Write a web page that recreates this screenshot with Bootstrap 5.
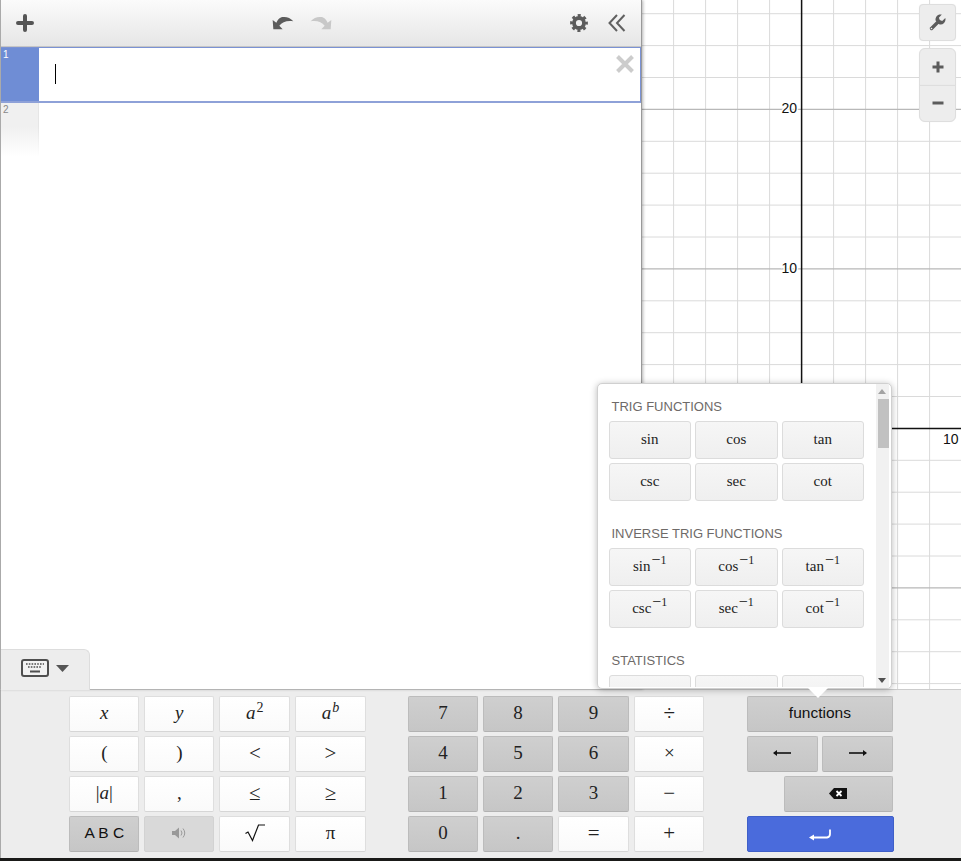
<!DOCTYPE html>
<html lang="en">
<head>
  <meta charset="UTF-8" />
  <title>Graphing Calculator</title>
  <link href="https://cdn.jsdelivr.net/npm/bootstrap@5.3.0/dist/css/bootstrap.min.css" rel="stylesheet" />
  <style>
    html, body { height: 100%; overflow: hidden; }
    body { background: #1a1a18; font-family: "Liberation Sans", Arial, sans-serif; color: #222; }
    svg { display: block; }

    .app { height: 858px; }
    .top { height: 689px; }

    /* expression panel */
    .panel { width: 642px; height: 689px; background: #fff; border-left: 1px solid #aaa; border-right: 1px solid #999; box-shadow: 1px 0 3px rgba(0,0,0,.3); z-index: 2; }
    .panel-head { height: 47px; flex: none; background: linear-gradient(#fbfbfb, #e6e6e6); border-bottom: 1px solid #c6c6c6; }
    .ico-plus { margin-left: 15px; }
    .ico-undo { margin-left: 238px; }
    .ico-redo { margin-left: 16px; }
    .ico-gear { margin-left: 238px; }
    .ico-back { margin-left: 20px; }
    .expr { height: 56px; flex: none; border-top: 1px solid #7b92d3; border-right: 1px solid #7b92d3; border-bottom: 2px solid #8ea1d8; }
    .expr-tab { width: 38px; font-size: 10px; line-height: 12px; padding: 1px 0 0 2px; }
    .expr-tab.on { background: #6f8dd5; color: #fff; }
    .expr-tab.off { background: linear-gradient(#f0f0f0 45%, #fff); color: #888; border-right: 1px solid; border-image: linear-gradient(#e6e6e6 45%, #fff) 1; }
    .expr-next { height: 53px; flex: none; }
    .cursor { width: 1px; height: 20px; background: #000; margin: 16px 0 0 16px; }
    .expr-del { margin: 7px 6px 0 0; }
    .kbd-tab { width: 89px; height: 41px; margin-bottom: -1px; background: #ededed; border-top: 1px solid #ddd; border-right: 1px solid #ddd; border-top-right-radius: 6px; padding: 0 0 4px 20px; gap: 7px; position: relative; }

    /* graph tools */
    .tools { top: 4px; right: 5px; width: 37px; z-index: 1; gap: 7px; }
    .tool { background: #ededed; border: 1px solid #dedede; width: 37px; height: 37px; padding: 0; box-shadow: 0 0 1px rgba(0,0,0,.08); }
    .tool:hover { background: #ededed; border-color: #dedede; }
    .tool-group .tool { height: 37.5px; }

    /* keypad */
    .keypad { height: 169px; background: #ededed; border-top: 1px solid #ccc; border-left: 1px solid #aaa; padding: 6px 0 0 68.3px; gap: 42.5px; }
    .keys { display: grid; grid-template-columns: 70px 70px 71px 70.3px; grid-auto-rows: 35.5px; gap: 4.5px 5px; }
    .keys-right { width: 146px; gap: 4.5px; }
    .keys-right > div { gap: 4.5px; height: 35.5px; }
    .key { padding: 0 0 1px; border-radius: 2px; display: flex; align-items: center; justify-content: center; font: 19px "Liberation Serif", "Times New Roman", serif; color: #222; background: linear-gradient(#fff, #fafafa); border: 1px solid #dedede; border-bottom-color: #d6d6d6; }
    .key.op { font-size: 21px; }
    .key.dark { background: linear-gradient(#cfcfcf, #c6c6c6); border-color: #bcbcbc; border-bottom-color: #b2b2b2; }
    .key.muted { background: #d9d9d9; border-color: #d2d2d2; }
    .key.sans { font: 15.5px "Liberation Sans", Arial, sans-serif; color: #111; }
    .key.blue { background: #4a6bdc; border-color: #3f5fc8; height: 35.5px; width: 147px; flex: none; }
    .key sup { font-size: 14px; top: -.5em; margin-left: 1px; }
    .grow { flex: 1 1 0; }
    .key-back { width: 109px; }
    .ret { margin-top: 3px; }

    /* functions popup */
    .fn-pop { left: 597px; top: 383px; width: 294.5px; height: 305.5px; background: #fff; border-radius: 5px; border: 1px solid #d0d0d0; box-shadow: 0 1px 7px rgba(0,0,0,.28); z-index: 5; }
    .fn-body { padding: 13px 12px 0 11px; width: 277.5px; height: 303px; overflow: hidden; }
    .fn-title { height: 19px; line-height: 20px; font-size: 13px; color: #6e6a68; padding-left: 2.500px; margin-bottom: 5px; }
    .fn-keys { display: grid; grid-template-columns: 81.5px 82.5px 81.5px; grid-auto-rows: 38px; gap: 4px 4.5px; margin-bottom: 23px; }
    .fn-key { padding: 0 0 2px; font: 15px "Liberation Serif", "Times New Roman", serif; color: #222; background: linear-gradient(#f6f6f6, #efefef); border: 1px solid #dcdcdc; border-radius: 3px; }
    .fn-key sup { font-size: 12px; top: -.55em; margin-left: 1px; }
    .fn-key sup span { font-size: 16px; vertical-align: -1px; }
    .scroll { width: 13px; background: #f1f1f1; margin-left: auto; margin-right: 2px; }
    .scroll-thumb { height: 49px; width: 11px; background: #c1c1c1; margin: 5px 0 0 2px; }
    .scroll-up { border: 4px solid transparent; border-top: 0; border-bottom: 5px solid #a3a3a3; margin: 5px auto 0; width: 0; }
    .scroll-down { border: 4px solid transparent; border-bottom: 0; border-top: 5px solid #505050; margin: auto auto 5px; width: 0; }
    .fn-arrow { left: 808px; top: 688px; z-index: 6; }
  </style>
</head>
<body>
  <div class="app position-relative d-flex flex-column">

    <div class="top d-flex position-relative">
      <!-- Expression list -->
      <div class="panel d-flex flex-column position-relative">
        <div class="panel-head d-flex align-items-center">
          <svg class="ico-plus" width="18" height="18" viewBox="0 0 18 18"><path d="M9 2v14M2 9h14" stroke="#555" stroke-width="4" stroke-linecap="round"/></svg>
          <svg class="ico-undo" width="22" height="14" viewBox="36 30 66 42"><path d="M38 42L40 70H68L58 59C66 49 82 42 100 46C92 36 80 32 70 33C62 33 55 37 49 50Z" fill="#5c5c5c"/></svg>
          <svg class="ico-redo" width="22" height="14" viewBox="36 30 66 42"><path d="M100 42L98 70H70L80 59C72 49 56 42 38 46C46 36 58 32 68 33C76 33 83 37 89 50Z" fill="#c8c8c8"/></svg>
          <svg class="ico-gear" width="18" height="18" viewBox="0 0 18 18"><circle cx="9" cy="9" r="5" fill="none" stroke="#5c5c5c" stroke-width="3.8"/><circle cx="9" cy="9" r="7.4" fill="none" stroke="#5c5c5c" stroke-width="3" stroke-dasharray="3 2.81" stroke-dashoffset="1.5"/></svg>
          <svg class="ico-back" width="18" height="18" viewBox="0 0 18 18"><path d="M9 1L1.5 9L9 17M16.500 1L9 9L16.500 17" fill="none" stroke="#606060" stroke-width="2"/></svg>
        </div>
        <div class="expr d-flex">
          <div class="expr-tab on">1</div>
          <div class="cursor"></div>
          <svg class="expr-del ms-auto" width="18" height="18" viewBox="0 0 18 18"><path d="M1.500 1.500L16.500 16.500M16.500 1.500L1.500 16.500" stroke="#ccc" stroke-width="4"/></svg>
        </div>
        <div class="expr-next d-flex">
          <div class="expr-tab off">2</div>
        </div>
        <div class="kbd-tab d-flex align-items-center mt-auto">
          <svg width="28" height="18" viewBox="0 0 28 18"><rect x="1" y="1" width="26" height="16" rx="2" fill="#f2f2f2" stroke="#4f4f4f" stroke-width="2"/><path d="M5 5h18M7 8h14" stroke="#4f4f4f" stroke-width="1.600" stroke-dasharray="1.600 1.200"/><path d="M9 12.500h10" stroke="#4f4f4f" stroke-width="2"/></svg>
          <svg width="13" height="7" viewBox="0 0 13 7"><path d="M0 0H13L6.500 7Z" fill="#555"/></svg>
        </div>
      </div>

      <!-- Graph -->
      <svg width="319" height="689" viewBox="642 0 319 689">
        <rect x="642" y="0" width="319" height="689" fill="#fff"/>
        <path d="M673.600 0V689M705.600 0V689M737.600 0V689M769.600 0V689M833.600 0V689M865.600 0V689M897.600 0V689M929.600 0V689M642 13.700H961M642 45.600H961M642 77.500H961M642 141.300H961M642 173.200H961M642 205.100H961M642 237H961M642 300.800H961M642 332.700H961M642 364.600H961M642 396.500H961M642 460.300H961M642 492.200H961M642 524.100H961M642 556H961M642 619.800H961M642 651.700H961M642 683.600H961" stroke="#dadada" stroke-width="1"/>
        <path d="M642 109.400H961M642 268.900H961M642 587.900H961" stroke="#b8b8b8" stroke-width="1.300"/>
        <path d="M801.600 0V689M642 428.400H961" stroke="#111" stroke-width="1.500"/>
        <g font-family="Liberation Sans, Arial, sans-serif" font-size="14" fill="#111" stroke="#fff" stroke-width="3" paint-order="stroke">
          <text x="797" y="113" text-anchor="end">20</text>
          <text x="797" y="273" text-anchor="end">10</text>
          <text x="958.500" y="444" text-anchor="end">10</text>
        </g>
      </svg>

      <!-- Graph tools -->
      <div class="tools position-absolute d-flex flex-column">
        <button class="btn tool rounded-1 d-flex align-items-center justify-content-center" aria-label="settings">
          <svg width="17" height="17" viewBox="0 0 17 17"><path d="M2.500 14.500L9 8" stroke="#5c5c5c" stroke-width="3.400" stroke-linecap="round"/><path d="M6.600 6.400A5 5 0 0 1 12.800 .6L9.900 3.800L10.800 6.100L13.200 6.900L16.300 4A5 5 0 0 1 10.200 10.200Z" fill="#5c5c5c"/><circle cx="2.500" cy="14.500" r=".8" fill="#ededed"/></svg>
        </button>
        <div class="tool-group btn-group-vertical">
          <button class="btn tool d-flex align-items-center justify-content-center" aria-label="zoom in"><svg width="14" height="14" viewBox="0 0 14 14"><path d="M7 1.500v11M1.500 7h11" stroke="#5c5c5c" stroke-width="3"/></svg></button>
          <button class="btn tool d-flex align-items-center justify-content-center" aria-label="zoom out"><svg width="14" height="14" viewBox="0 0 14 14"><path d="M1.500 7h11" stroke="#5c5c5c" stroke-width="3"/></svg></button>
        </div>
      </div>
    </div>

    <!-- Keypad -->
    <div class="keypad d-flex">
      <div class="keys">
        <button class="btn key"><i>x</i></button>
        <button class="btn key"><i>y</i></button>
        <button class="btn key"><span><i>a</i><sup>2</sup></span></button>
        <button class="btn key"><span><i>a</i><sup><i>b</i></sup></span></button>
        <button class="btn key">(</button>
        <button class="btn key">)</button>
        <button class="btn key op">&lt;</button>
        <button class="btn key op">&gt;</button>
        <button class="btn key"><span>|<i>a</i>|</span></button>
        <button class="btn key">,</button>
        <button class="btn key op">≤</button>
        <button class="btn key op">≥</button>
        <button class="btn key dark sans">A B C</button>
        <button class="btn key muted" aria-label="audio">
          <svg width="14" height="12" viewBox="0 0 14 12"><path d="M0 4h3l4-3.500v11L3 8H0z" fill="#999"/><path d="M9 3.500q2 2.500 0 5M11 1.500q3.500 4.500 0 9" fill="none" stroke="#999"/></svg>
        </button>
        <button class="btn key" aria-label="square root">
          <svg width="20" height="18" viewBox="0 0 20 18"><path d="M.5 9.500L3 8L7.500 16.500L13.500 1H20" fill="none" stroke="#111" stroke-width="1.200"/></svg>
        </button>
        <button class="btn key">π</button>
      </div>

      <div class="keys">
        <button class="btn key dark">7</button>
        <button class="btn key dark">8</button>
        <button class="btn key dark">9</button>
        <button class="btn key op">÷</button>
        <button class="btn key dark">4</button>
        <button class="btn key dark">5</button>
        <button class="btn key dark">6</button>
        <button class="btn key">×</button>
        <button class="btn key dark">1</button>
        <button class="btn key dark">2</button>
        <button class="btn key dark">3</button>
        <button class="btn key op">−</button>
        <button class="btn key dark">0</button>
        <button class="btn key dark">.</button>
        <button class="btn key op">=</button>
        <button class="btn key op">+</button>
      </div>

      <div class="keys-right d-flex flex-column">
        <div class="d-flex"><button class="btn key dark sans grow">functions</button></div>
        <div class="d-flex">
          <button class="btn key dark grow" aria-label="left"><svg width="18" height="8" viewBox="0 0 18 8"><path d="M1 4H18" stroke="#111" stroke-width="1.600"/><path d="M0 4L4 1V7Z" fill="#111"/></svg></button>
          <button class="btn key dark grow" aria-label="right"><svg width="18" height="8" viewBox="0 0 18 8"><path d="M0 4H17" stroke="#111" stroke-width="1.600"/><path d="M18 4L14 1V7Z" fill="#111"/></svg></button>
        </div>
        <div class="d-flex"><button class="btn key dark key-back ms-auto" aria-label="backspace"><svg width="18" height="11" viewBox="0 0 18 11"><path d="M5 0H18V11H5L0 5.500Z" fill="#111"/><path d="M7.500 3L12.500 8M12.500 3L7.500 8" stroke="#fff" stroke-width="1.800"/></svg></button></div>
        <div class="d-flex"><button class="btn key blue" aria-label="enter"><svg class="ret" width="22" height="12" viewBox="0 0 22 12"><path d="M21 .5V5Q21 8 18 8.500H3" fill="none" stroke="#fff" stroke-width="1.800"/><path d="M0 8.500L5 5.500V11.500Z" fill="#fff"/></svg></button></div>
      </div>
    </div>

    <!-- Functions popup -->
    <div class="fn-pop position-absolute d-flex">
      <div class="fn-body">
        <div class="fn-title">TRIG FUNCTIONS</div>
        <div class="fn-keys">
          <button class="btn fn-key">sin</button>
          <button class="btn fn-key">cos</button>
          <button class="btn fn-key">tan</button>
          <button class="btn fn-key">csc</button>
          <button class="btn fn-key">sec</button>
          <button class="btn fn-key">cot</button>
        </div>
        <div class="fn-title">INVERSE TRIG FUNCTIONS</div>
        <div class="fn-keys">
          <button class="btn fn-key">sin<sup><span>−</span>1</sup></button>
          <button class="btn fn-key">cos<sup><span>−</span>1</sup></button>
          <button class="btn fn-key">tan<sup><span>−</span>1</sup></button>
          <button class="btn fn-key">csc<sup><span>−</span>1</sup></button>
          <button class="btn fn-key">sec<sup><span>−</span>1</sup></button>
          <button class="btn fn-key">cot<sup><span>−</span>1</sup></button>
        </div>
        <div class="fn-title">STATISTICS</div>
        <div class="fn-keys">
          <button class="btn fn-key"></button>
          <button class="btn fn-key"></button>
          <button class="btn fn-key"></button>
        </div>
      </div>
      <div class="scroll d-flex flex-column">
        <div class="scroll-up"></div>
        <div class="scroll-thumb"></div>
        <div class="scroll-down"></div>
      </div>
    </div>
    <svg class="fn-arrow position-absolute" width="20" height="10" viewBox="0 0 20 10"><path d="M0 0H20L10 10Z" fill="#fff"/></svg>
  </div>

  <script src="https://cdn.jsdelivr.net/npm/bootstrap@5.3.0/dist/js/bootstrap.bundle.min.js"></script>
</body>
</html>
